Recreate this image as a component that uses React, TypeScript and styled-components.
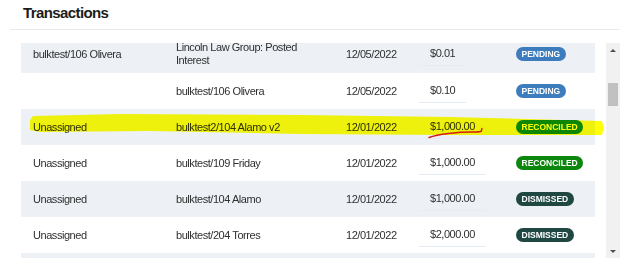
import React, { useLayoutEffect, useRef } from 'react';
import styled, { createGlobalStyle } from 'styled-components';

type Status = 'pending' | 'reconciled' | 'dismissed';

interface Transaction {
  id: number;
  account: string;
  description: string;
  date: string;
  amount: string;
  status: Status;
}

const transactions: Transaction[] = [
  { id: 1, account: 'bulktest/106 Olivera', description: 'Lincoln Law Group: Posted Interest', date: '12/05/2022', amount: '$0.01', status: 'pending' },
  { id: 2, account: '', description: 'bulktest/106 Olivera', date: '12/05/2022', amount: '$0.10', status: 'pending' },
  { id: 3, account: 'Unassigned', description: 'bulktest2/104 Alamo v2', date: '12/01/2022', amount: '$1,000.00', status: 'reconciled' },
  { id: 4, account: 'Unassigned', description: 'bulktest/109 Friday', date: '12/01/2022', amount: '$1,000.00', status: 'reconciled' },
  { id: 5, account: 'Unassigned', description: 'bulktest/104 Alamo', date: '12/01/2022', amount: '$1,000.00', status: 'dismissed' },
  { id: 6, account: 'Unassigned', description: 'bulktest/204 Torres', date: '12/01/2022', amount: '$2,000.00', status: 'dismissed' },
  { id: 7, account: 'Unassigned', description: 'bulktest/201 Torres', date: '11/30/2022', amount: '$500.00', status: 'dismissed' },
];

const badgeColors: Record<Status, string> = {
  pending: '#3d7dbd',
  reconciled: '#0d860d',
  dismissed: '#1f4843',
};

const GlobalStyle = createGlobalStyle`
  * { box-sizing: border-box; }
  html, body { margin: 0; background: #fff; }
  body { font-family: 'Liberation Sans', Arial, sans-serif; color: #333; }
`;

const Panel = styled.section`
  width: 610px;
  margin-left: 10px;
`;

const Header = styled.header`
  height: 30px;
  padding: 4px 0 0 13px;
  border-bottom: 1px solid #ebebeb;
`;

const Title = styled.h2`
  margin: 0;
  font-size: 15px;
  line-height: 17px;
  font-weight: 700;
  letter-spacing: -0.6px;
  color: #1c1c1c;
`;

const Body = styled.div`
  position: relative;
  isolation: isolate;
  display: flex;
  gap: 11px;
  height: 215px;
  margin-top: 13px;
  padding-left: 11px;
`;

const Viewport = styled.div`
  width: 574px;
  height: 100%;
  overflow: hidden;
`;

const Row = styled.div<{ $striped: boolean }>`
  display: grid;
  grid-template-columns: 143px 170px 73px 97px 1fr;
  align-items: center;
  min-height: 36px;
  padding: 6px 0 6px 12px;
  background: ${(p) => (p.$striped ? '#edf1f6' : '#fff')};
  font-size: 11px;
  line-height: 13px;
  letter-spacing: -0.45px;
  color: #2f2f2f;
`;

const Cell = styled.div`
  padding-right: 16px;
`;

const Amount = styled.span`
  justify-self: start;
  padding: 5px 11px;
  border-bottom: 1px solid #e6ecf3;
`;

const Badge = styled.span<{ $status: Status }>`
  justify-self: start;
  height: 14px;
  padding: 0 5.5px;
  border-radius: 7px;
  background: ${(p) => badgeColors[p.$status]};
  color: #fff;
  font-size: 8.5px;
  line-height: 14px;
  font-weight: 700;
  letter-spacing: 0;
  text-transform: uppercase;
`;

const ScrollTrack = styled.div`
  width: 14px;
  height: 100%;
  background: #f1f1f1;
  display: flex;
  flex-direction: column;
`;

const Arrow = styled.span<{ $dir: 'up' | 'down' }>`
  height: 14px;
  display: flex;
  align-items: center;
  justify-content: center;

  &::before {
    content: '';
    border-left: 3px solid transparent;
    border-right: 3px solid transparent;
    ${(p) => (p.$dir === 'up' ? 'border-bottom: 3px solid #505050;' : 'border-top: 3px solid #505050;')}
  }
`;

const Rail = styled.div`
  flex: 1;
  padding: 26px 2px 0;
`;

const Thumb = styled.div`
  height: 23px;
  background: #c1c1c1;
`;

// marker + pen scribbles drawn on top of the screenshot
const Annotation = styled.svg`
  position: absolute;
  left: 0;
  top: 0;
  width: 610px;
  height: 215px;
  overflow: visible;
  pointer-events: none;
  mix-blend-mode: multiply;
  z-index: 1;
`;

export default function App() {
  const viewportRef = useRef<HTMLDivElement>(null);

  useLayoutEffect(() => {
    if (viewportRef.current) {
      viewportRef.current.scrollTop = 8;
    }
  }, []);

  return (
    <>
      <GlobalStyle />
      <Panel>
        <Header>
          <Title>Transactions</Title>
        </Header>
        <Body>
          <Viewport ref={viewportRef}>
            {transactions.map((t, i) => (
              <Row key={`tx_${t.id}`} $striped={i % 2 === 0}>
                <Cell>{t.account}</Cell>
                <Cell>{t.description}</Cell>
                <Cell>{t.date}</Cell>
                <Amount>{t.amount}</Amount>
                <Badge $status={t.status}>{t.status}</Badge>
              </Row>
            ))}
          </Viewport>
          <ScrollTrack>
            <Arrow $dir="up" />
            <Rail>
              <Thumb />
            </Rail>
            <Arrow $dir="down" />
          </ScrollTrack>
          <Annotation viewBox="0 0 610 215">
            <polygon
              points="20,77 23,73 110,71 290,72 440,74 592,78 594,85 592,92 440,92 290,91 140,88 30,89 20,87"
              fill="#ffff0c"
            />
            <path
              d="M419 94.5 C 428 91, 448 89, 462 89 S 470 87.5, 472 85.5"
              fill="none"
              stroke="#e41c16"
              strokeWidth={1.4}
              strokeLinecap="round"
            />
          </Annotation>
        </Body>
      </Panel>
    </>
  );
}
